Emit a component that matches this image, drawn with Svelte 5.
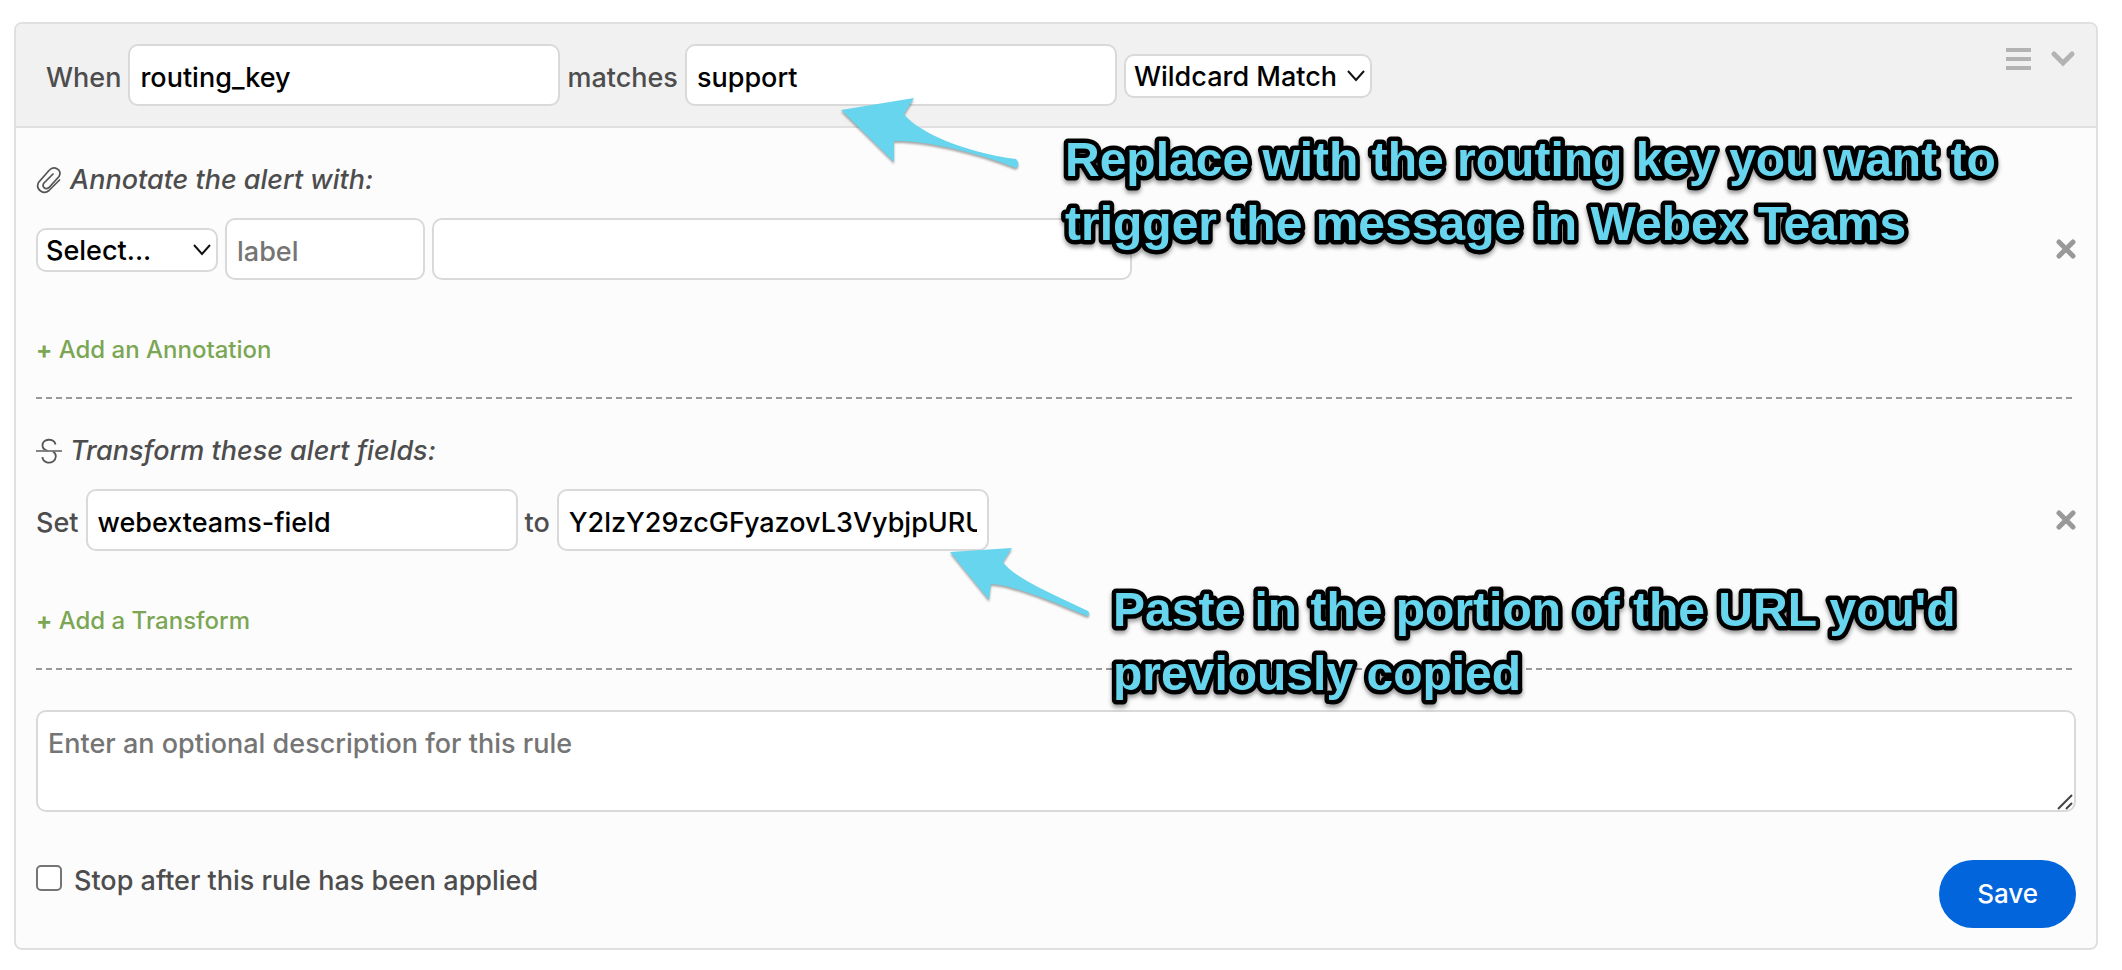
<script>
  let matchField = $state('routing_key');
  let matchValue = $state('support');
  let matchType = $state('wildcard');
  let annotationType = $state('');
  let label = $state('');
  let annotation = $state('');
  let field = $state('webexteams-field');
  let fieldValue = $state('Y2lzY29zcGFyazovL3VybjpURU');
  let description = $state('');
  let stop = $state(false);
</script>

{#snippet cross()}
  <svg width="20" height="20" viewBox="0 0 20 20" fill="none" stroke="#999" stroke-width="5" stroke-linecap="round" aria-hidden="true">
    <path d="M3 3 17 17M17 3 3 17" />
  </svg>
{/snippet}

{#snippet caret()}
  <svg class="caret" width="18" height="12" viewBox="0 0 18 12" fill="none" stroke="#111" stroke-width="2" aria-hidden="true">
    <path d="M1 1 9 10 17 1" />
  </svg>
{/snippet}

<form class="rule" onsubmit={(e) => e.preventDefault()}>
  <header>
    <div class="fields">
      <label for="match-field">When</label>
      <input id="match-field" class="box" type="text" bind:value={matchField} />
      <label for="match-value">matches</label>
      <input id="match-value" class="box" type="text" bind:value={matchValue} />
      <span class="select wide">
        <select aria-label="Match type" bind:value={matchType}>
          <option value="wildcard">Wildcard Match</option>
          <option value="regex">Regex Match</option>
        </select>
        {@render caret()}
      </span>
    </div>
    <div class="tools">
      <button type="button" class="icon" aria-label="Reorder rule">
        <svg width="25" height="24" viewBox="0 0 25 24" fill="none" stroke="#b3b3b3" stroke-width="4" aria-hidden="true">
          <path d="M0 3H25M0 12H25M0 21H25" />
        </svg>
      </button>
      <button type="button" class="icon" aria-label="Collapse rule">
        <svg width="26" height="24" viewBox="0 0 26 24" fill="none" stroke="#b3b3b3" stroke-width="5" stroke-linecap="round" aria-hidden="true">
          <path d="M4 7 13 16 22 7" />
        </svg>
      </button>
    </div>
  </header>

  <section>
    <h2>
      <svg width="26" height="28" viewBox="0 0 26 28" fill="none" stroke="#555" stroke-width="1.7" stroke-linecap="round" aria-hidden="true">
        <path d="M23.500 14 13 24.500C8 29 -1 24 2.500 16.500L13 4.500C18 -1 27 4 23 10.500L13 21.500C9 24.500 5.500 20.500 8 17L17 8" />
      </svg>
      Annotate the alert with:
    </h2>
    <div class="row">
      <div class="fields">
        <span class="select">
          <select aria-label="Annotation type" bind:value={annotationType}>
            <option value="">Select...</option>
            <option value="url">URL</option>
            <option value="note">Note</option>
          </select>
          {@render caret()}
        </span>
        <input class="box short" type="text" placeholder="label" aria-label="Label" bind:value={label} />
        <input class="box long" type="text" aria-label="Annotation" bind:value={annotation} />
      </div>
      <button type="button" class="icon" aria-label="Remove annotation">{@render cross()}</button>
    </div>
    <button type="button" class="add"><b>+</b> Add an Annotation</button>
  </section>

  <section>
    <h2>
      <svg width="26" height="26" viewBox="0 0 26 26" fill="none" stroke="#555" stroke-width="1.8" aria-hidden="true">
        <path d="M19.500 6.500C18.500 0 6.500 0 6.500 7.500C6.500 10 8.500 12 12 13M17 13.500C21 16 20.500 21 17 23.500C13 26 6.500 24 6.500 19" />
        <path d="M0 13H26" stroke="#777" />
      </svg>
      Transform these alert fields:
    </h2>
    <div class="row">
      <div class="fields">
        <label for="field">Set</label>
        <input id="field" class="box" type="text" bind:value={field} />
        <label for="field-value">to</label>
        <input id="field-value" class="box" type="text" bind:value={fieldValue} />
      </div>
      <button type="button" class="icon" aria-label="Remove transform">{@render cross()}</button>
    </div>
    <button type="button" class="add"><b>+</b> Add a Transform</button>
  </section>

  <div class="description">
    <textarea placeholder="Enter an optional description for this rule" aria-label="Description" bind:value={description}></textarea>
    <svg class="grip" width="16" height="16" viewBox="0 0 16 16" fill="none" stroke="#444" stroke-width="2" aria-hidden="true">
      <path d="M1 15 15 1M9 15 15 9" />
    </svg>
  </div>

  <footer>
    <label class="stop"><input type="checkbox" bind:checked={stop} /><span>Stop after this rule has been applied</span></label>
    <button type="submit" class="save">Save</button>
  </footer>

  <svg class="arrow first" width="180" height="76" viewBox="0 0 180 76" aria-hidden="true">
    <path d="M2 14 75 2 65 18C77 35 126 57 177 63Q182 68 177 72C132 54 80 44 55 45V66Z" />
  </svg>
  <svg class="callout one" width="960" height="140">
    <text x="10" y="50">Replace with the routing key you want to</text>
    <text x="10" y="114">trigger the message in Webex Teams</text>
  </svg>

  <svg class="arrow second" width="144" height="72" viewBox="0 0 144 72" aria-hidden="true">
    <path d="M2 6 64 2 55 16C66 32 106 49 140 65Q143 69 139 70C98 53 64 39 43 38L41 54Z" />
  </svg>
  <svg class="callout two" width="960" height="140">
    <text x="10" y="50">Paste in the portion of the URL you'd</text>
    <text x="10" y="114">previously copied</text>
  </svg>
</form>

<style>
  :global(body) {
    background: #fff;
  }

  .rule {
    position: relative;
    margin: 22px 24px 21px 14px;
    border: 2px solid #e0e0e0;
    border-radius: 8px;
    background: #fcfcfc;
    color: #4d4d4d;
    font: 500 27px/32px Inter, sans-serif;
  }

  .rule *,
  .rule {
    box-sizing: border-box;
  }

  input,
  select,
  textarea,
  button {
    font: inherit;
    margin: 0;
  }

  header {
    display: flex;
    justify-content: space-between;
    padding: 20px;
    padding-left: 30px;
    border-bottom: 2px solid #e0e0e0;
    border-radius: 6px 6px 0 0;
    background: #f1f1f1;
  }

  .fields {
    display: flex;
    align-items: center;
    gap: 7px;
  }

  .fields label {
    padding-top: 5px;
  }

  .box {
    width: 432px;
    height: 62px;
    padding: 4px 10px 0;
    border: 2px solid #d9d9d9;
    border-radius: 10px;
    background: #fff;
    color: #000;
  }

  .box.short {
    width: 200px;
  }

  .box.long {
    width: 700px;
  }

  ::placeholder {
    color: #757575;
    opacity: 1;
  }

  .select {
    position: relative;
    width: 182px;
    padding-top: 2px;
  }

  .select.wide {
    width: 248px;
  }

  select {
    display: block;
    width: 100%;
    height: 44px;
    padding: 2px 30px 0 8px;
    border: 2px solid #d9d9d9;
    border-radius: 10px;
    background: #fff;
    color: #000;
    appearance: none;
  }

  .caret {
    position: absolute;
    right: 7px;
    top: 18px;
    pointer-events: none;
  }

  .tools {
    display: flex;
    align-items: flex-start;
    gap: 19px;
    padding-top: 3px;
  }

  .icon {
    display: flex;
    padding: 0;
    border: 0;
    background: none;
  }

  section {
    margin: 0 20px;
    padding: 36px 0 33px;
    background: repeating-linear-gradient(90deg, #999 0 6px, transparent 6px 10px) bottom / 100% 2px no-repeat;
  }

  h2 {
    display: flex;
    align-items: center;
    gap: 8px;
    margin: 0 0 22px;
    font: inherit;
    font-style: italic;
  }

  .row {
    display: flex;
    align-items: center;
    justify-content: space-between;
    margin-bottom: 54px;
  }

  .add {
    display: block;
    padding: 0;
    border: 0;
    background: none;
    color: #7ba653;
    font-size: 24px;
  }

  .description {
    position: relative;
    margin: 40px 20px 0;
  }

  textarea {
    display: block;
    width: 100%;
    height: 102px;
    padding: 16px 10px;
    border: 2px solid #d9d9d9;
    border-radius: 10px;
    background: #fff;
    resize: none;
  }

  .grip {
    position: absolute;
    right: 3px;
    bottom: 2px;
  }

  footer {
    display: flex;
    align-items: flex-start;
    justify-content: space-between;
    padding: 48px 20px 20px;
  }

  .stop {
    display: flex;
    align-items: flex-start;
    gap: 12px;
    padding-top: 5px;
  }

  .stop input {
    width: 26px;
    height: 26px;
    border: 2px solid #757575;
    border-radius: 5px;
    background: #fff;
    appearance: none;
  }

  .stop input:checked {
    background: #0265dc;
  }

  .save {
    padding: 18px 38px;
    border: 0;
    border-radius: 34px;
    background: #0265dc;
    color: #fff;
    font-size: 26px;
  }

  .arrow {
    position: absolute;
    fill: #67d5ee;
    filter: drop-shadow(0 2px 1px rgb(0 0 0 / 35%));
    pointer-events: none;
  }

  .first {
    left: 823px;
    top: 72px;
  }

  .second {
    left: 932px;
    top: 522px;
  }

  .callout {
    position: absolute;
    fill: #67d5ee;
    stroke: #000;
    stroke-width: 9px;
    stroke-linejoin: round;
    paint-order: stroke fill;
    font: bold 48px "Liberation Sans", sans-serif;
    filter: drop-shadow(0 3px 2px rgb(0 0 0 / 40%));
    pointer-events: none;
  }

  .one {
    left: 1039px;
    top: 102px;
  }

  .two {
    left: 1087px;
    top: 552px;
  }
</style>
